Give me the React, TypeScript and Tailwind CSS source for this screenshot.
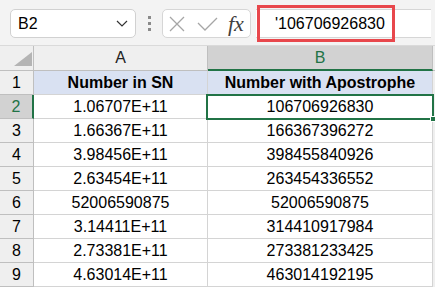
import React from 'react';

const ROWS: [string, string][] = [
  ['1.06707E+11', '106706926830'],
  ['1.66367E+11', '166367396272'],
  ['3.98456E+11', '398455840926'],
  ['2.63454E+11', '263454336552'],
  ['52006590875', '52006590875'],
  ['3.14411E+11', '314410917984'],
  ['2.73381E+11', '273381233425'],
  ['4.63014E+11', '463014192195'],
];

const App: React.FC = () => {
  return (
    <div className="w-[435px] h-[287px] overflow-hidden bg-[#f3f3f3] font-['Liberation_Sans',Arial,sans-serif] text-[16px] text-black">
      {/* Formula bar */}
      <div className="relative h-[45px] flex items-start pt-[9px]">
        <div className="ml-[10px] w-[126px] h-[29px] bg-white border border-[#d1d1d1] rounded-[5px] flex items-center pl-[7px] pr-[6px]">
          <span className="flex-1 leading-none">B2</span>
          <svg width="12" height="7" viewBox="0 0 12 7" className="mr-[1px]">
            <path d="M1 1 L6 6 L11 1" fill="none" stroke="#333" strokeWidth="1.2" />
          </svg>
        </div>
        <div className="ml-[12px] h-[29px] flex flex-col justify-center gap-[3px]">
          <span className="block w-[3px] h-[3px] bg-[#8a8a8a]" />
          <span className="block w-[3px] h-[3px] bg-[#8a8a8a]" />
          <span className="block w-[3px] h-[3px] bg-[#8a8a8a]" />
        </div>
        <div className="ml-[11px] w-[89px] h-[29px] bg-white border border-[#d6d6d6] rounded-[5px] flex items-center">
          <svg width="16" height="16" viewBox="0 0 16 16" className="ml-[6px]">
            <path d="M1 1 L15 15 M15 1 L1 15" stroke="#a6a6a6" strokeWidth="1.3" />
          </svg>
          <svg width="21" height="14" viewBox="0 0 21 14" className="ml-[12px]">
            <path d="M1 6 L8 13 L20 1" fill="none" stroke="#a6a6a6" strokeWidth="1.3" />
          </svg>
          <span className="ml-[10px] font-['Liberation_Serif',serif] italic text-[22px] leading-none text-[#404040]">fx</span>
        </div>
        <div className="ml-[5px] w-[175px] h-[29px] bg-white border-y border-[#d6d6d6] flex items-center pl-[19px]">
          <span className="leading-none">'106706926830</span>
        </div>
        {/* red highlight */}
        <div className="absolute left-[257px] top-[5px] w-[138px] h-[37px] border-[3px] border-[#e8474c]" />
      </div>

      {/* Grid */}
      <div className="relative grid grid-cols-[34px_174px_225px_2px] border-t border-[#dadada]">
        {/* header row */}
        <div className="h-[25px] bg-[#efefef] border-r border-b border-[#bfbfbf] relative">
          <svg width="18" height="14" viewBox="0 0 18 14" className="absolute left-[14px] top-[6px]">
            <path d="M18 0 L18 14 L0 14 Z" fill="#b4b4b4" />
          </svg>
        </div>
        <div className="h-[25px] bg-[#efefef] border-r border-b border-[#bfbfbf] flex items-center justify-center text-[#222]">A</div>
        <div className="h-[25px] bg-[#d2d2d2] border-r border-[#bfbfbf] border-b-2 border-b-[#217346] flex items-center justify-center text-[#217346]">B</div>
        <div className="h-[25px] bg-[#efefef] border-b border-[#bfbfbf]" />

        {/* row 1 */}
        <div className="h-[24px] bg-[#efefef] border-r border-b border-[#bfbfbf] flex items-center justify-center">1</div>
        <div className="h-[24px] bg-[#d9e1f2] border-r border-b border-[#d4d4d4] flex items-center justify-center font-bold">Number in SN</div>
        <div className="h-[24px] bg-[#d9e1f2] border-r border-b border-[#d4d4d4] flex items-center justify-center font-bold">Number with Apostrophe</div>
        <div className="h-[24px] bg-[#efefef]" />

        {ROWS.map(([a, b], i) => {
          const n = i + 2;
          const sel = n === 2;
          return (
            <React.Fragment key={n}>
              <div
                className={
                  sel
                    ? 'h-[24px] bg-[#d2d2d2] border-b border-[#bfbfbf] border-r-2 border-r-[#217346] flex items-center justify-center text-[#217346]'
                    : 'h-[24px] bg-[#efefef] border-r border-b border-[#bfbfbf] flex items-center justify-center'
                }
              >
                {n}
              </div>
              <div className="h-[24px] bg-white border-r border-b border-[#d4d4d4] flex items-center justify-center">{a}</div>
              <div className="h-[24px] bg-white border-r border-b border-[#d4d4d4] flex items-center justify-center">{b}</div>
              <div className="h-[24px] bg-[#efefef]" />
            </React.Fragment>
          );
        })}

        {/* selection B2 */}
        <div className="absolute left-[206px] top-[48px] w-[228px] h-[26px] border-2 border-[#217346] pointer-events-none">
          <div className="absolute right-[-4px] bottom-[-4px] w-[6px] h-[6px] bg-[#217346] border border-white" />
        </div>
      </div>
    </div>
  );
};

export default App;
